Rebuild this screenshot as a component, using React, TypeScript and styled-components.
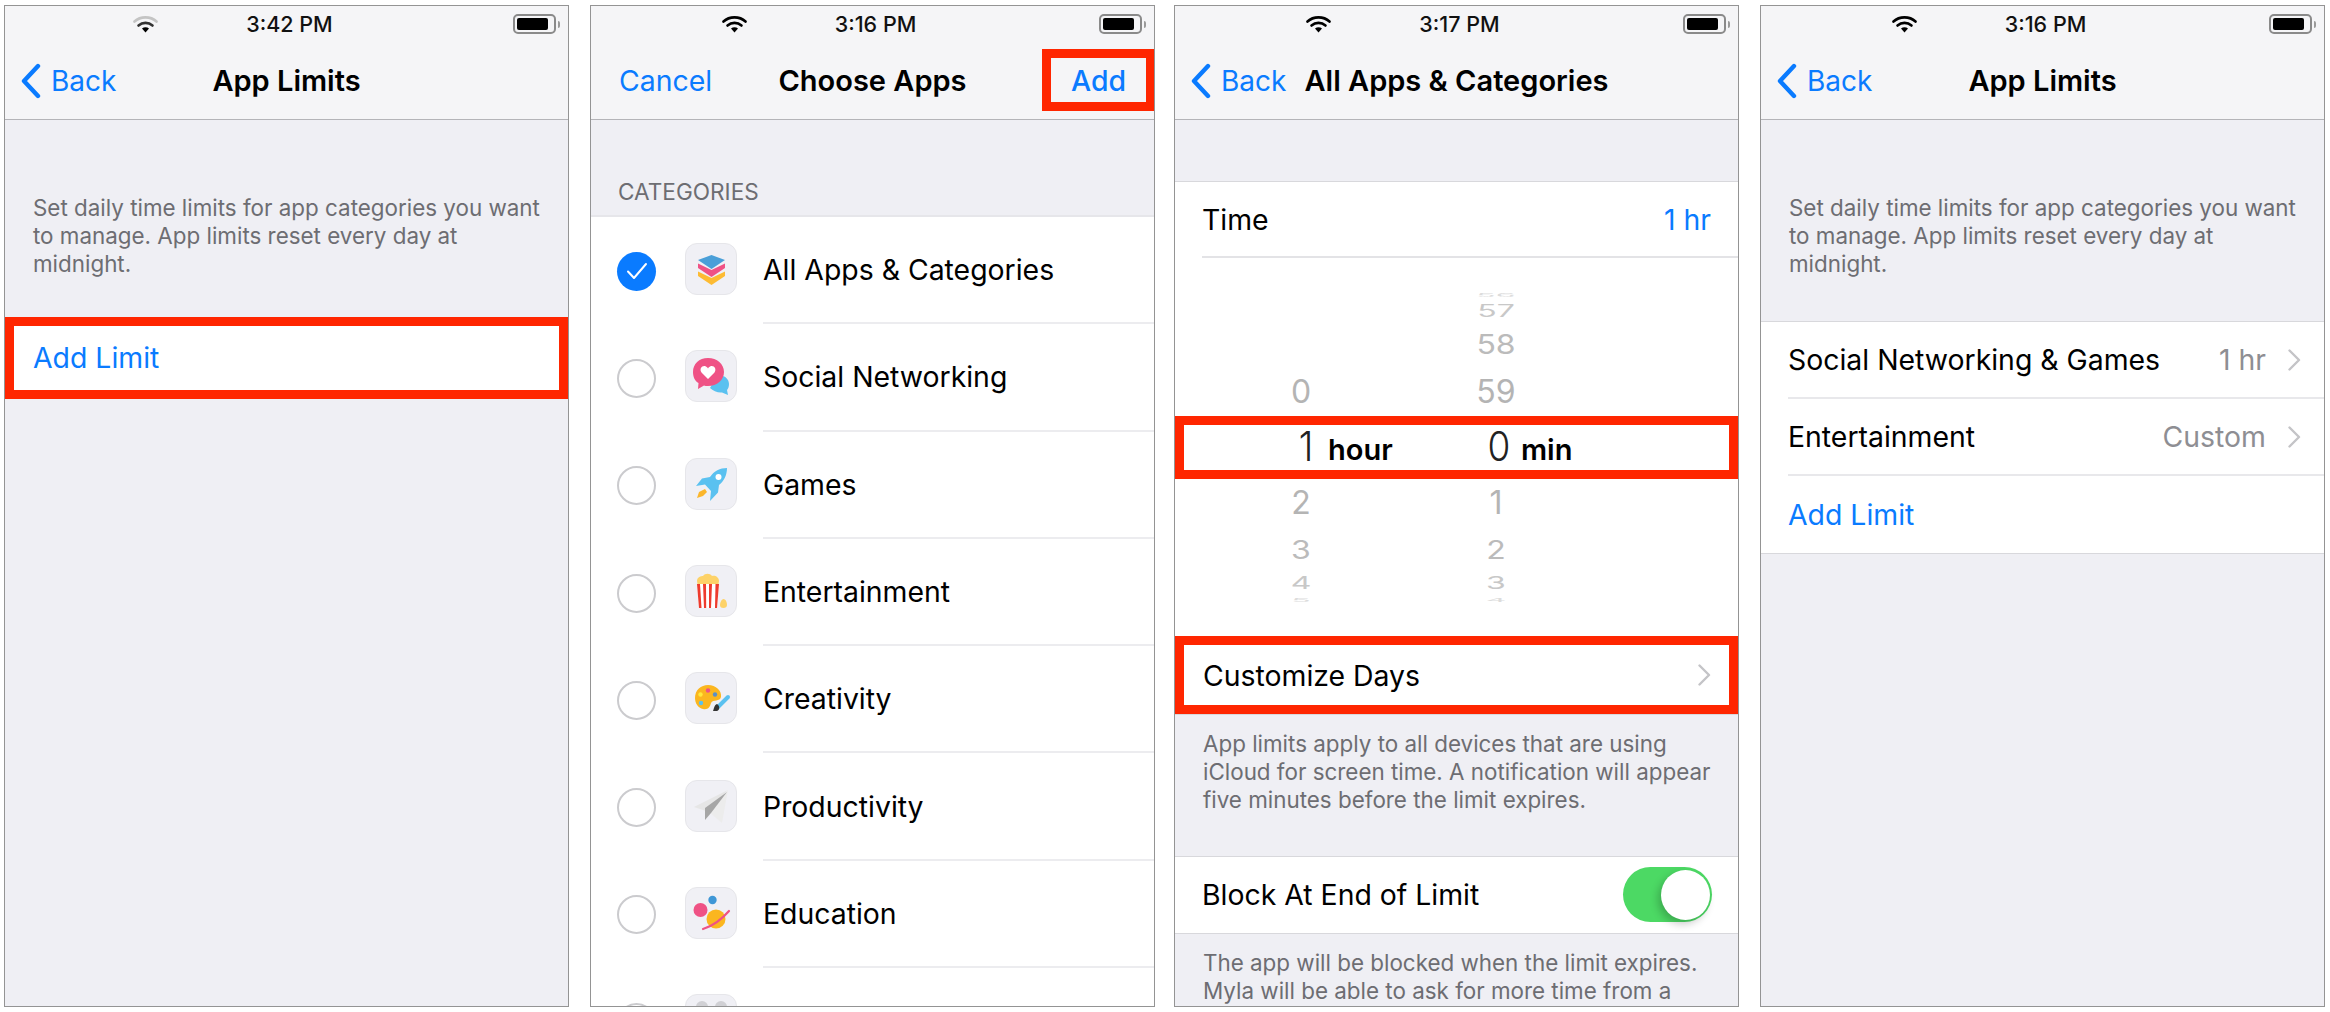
import * as React from "react";
import styled, { createGlobalStyle } from "styled-components";

const BLUE = "#0a7bff";
const RED = "#ff2600";
const SANS = `Inter, "Liberation Sans", sans-serif`;

const GlobalStyle = createGlobalStyle`
  html, body {
    margin: 0;
    padding: 0;
    background: #fff;
    font-family: ${SANS};
  }
`;

function WifiIcon({ dim }: { dim?: boolean }) {
  const outer = dim ? "#c4c4c4" : "#000";
  const mid = dim ? "#333" : "#000";
  return (
    <svg width="25" height="18" viewBox="0 0 25 18" fill="none">
      <path d="M1.5 6.5C7.5 1 17.5 1 23.5 6.5" stroke={outer} strokeWidth="2.6" strokeLinecap="round" />
      <path d="M5.5 10.5C9.5 7 15.5 7 19.5 10.5" stroke={mid} strokeWidth="2.6" strokeLinecap="round" />
      <path d="M9 13.4C11 11.7 14 11.7 16 13.4L12.5 17.5Z" fill="#000" />
    </svg>
  );
}

function ChevronLeft() {
  return (
    <svg width="21" height="36" viewBox="0 0 21 36" fill="none">
      <path d="M18 3L4 18L18 33" stroke={BLUE} strokeWidth="4.4" strokeLinecap="round" strokeLinejoin="round" />
    </svg>
  );
}

function Disclosure() {
  return (
    <svg width="13" height="22" viewBox="0 0 13 22" fill="none">
      <path d="M1.5 1.5L11 11L1.5 20.5" stroke="#c4c4c7" strokeWidth="2.4" strokeLinecap="round" strokeLinejoin="round" />
    </svg>
  );
}

function LayersIcon() {
  return (
    <svg width="51" height="51" viewBox="0 0 51 51">
      <path d="M25.5 34L39 27.5V32L25.5 41L12 32V27.5Z" fill="#fdbb33" />
      <path d="M25.5 26L39 19.5V24L25.5 33L12 24V19.5Z" fill="#ef5285" />
      <path d="M25.5 11L39 16L25.5 25L12 16Z" fill="#4a9fd8" strokeLinejoin="round" />
    </svg>
  );
}

function SocialIcon() {
  return (
    <svg width="51" height="51" viewBox="0 0 51 51">
      <path d="M31 25C38 23 43 28 43 33C43 36 42 38 41 39L42 44L36 41.5C32 42 27 40 24 37Z" fill="#5ac1f0" />
      <path d="M22 7C31 7 38 13 38 21C38 29 31 35 22 35C20 35 19 35 18 34.500L12 38L12.500 32C9 30 7 26 7 21C7 13 13 7 22 7Z" fill="#ef5285" />
      <path d="M22 28L15.500 21.500C13 18 16 14 19.500 15.200C20.700 15.600 21.500 16.500 22 17.500C22.500 16.500 23.300 15.600 24.500 15.200C28 14 31 18 28.500 21.500Z" fill="#fff" />
    </svg>
  );
}

function RocketIcon() {
  return (
    <svg width="51" height="51" viewBox="0 0 51 51">
      <path d="M41 9C34 9 28 12 24 18L16 19.500L10 27L19 25.500L25 32L24 42L32 33.500L33 26C38 22 41 16 41 9Z" fill="#5ac1f0" />
      <circle cx="32.500" cy="18" r="3" fill="#fff" />
      <path d="M19 30L13 33L11 39L17 37L21 33Z" fill="#fbb62c" />
    </svg>
  );
}

function PopcornIcon() {
  return (
    <svg width="51" height="51" viewBox="0 0 51 51">
      <path d="M11 15C11 11 15 10 17 10C19 7 24 7 26 10C29 9 33 11 33 15L32 21H12Z" fill="#fdd268" />
      <path d="M11 18H33L31 42H13Z" fill="#fff" />
      <path d="M11 18H14L15.500 42H13ZM17 18H20L20.200 42H18ZM23 18H26L25 42H23ZM29.500 18H33L31 42H29Z" fill="#ee3b2e" />
      <path d="M37.500 33C40 33 41 37 41 39C41 41 39.500 42 37.500 42C35 42 34 41 34 39C34 37 35.500 33 37.500 33Z" fill="#fdd268" />
    </svg>
  );
}

function PaletteIcon() {
  return (
    <svg width="51" height="51" viewBox="0 0 51 51">
      <path d="M22 12C30 12 36 18 35 24C34 29 27 26 25 30C24 34 22 37 17 36C12 35 9 30 9 25C9 17 15 12 22 12Z" fill="#fbb61f" />
      <circle cx="14.500" cy="21.500" r="2.200" fill="#ffe93b" />
      <circle cx="22" cy="17.500" r="2.200" fill="#ef5285" />
      <circle cx="29" cy="21.500" r="2.200" fill="#5b8fc7" />
      <circle cx="15" cy="30" r="2.200" fill="#5ac1f0" />
      <path d="M42 24L32 34" stroke="#5ac1f0" strokeWidth="4" strokeLinecap="round" />
      <path d="M31 31C34 33 34 37 31 38H27C28 36 28 32 31 31Z" fill="#333" />
    </svg>
  );
}

function PlaneIcon() {
  return (
    <svg width="51" height="51" viewBox="0 0 51 51">
      <path d="M42 9L8 26L20 30Z" fill="#e6e6e6" />
      <path d="M42 9L24 32L36 42Z" fill="#ececec" />
      <path d="M41 11L19 27V39L25 32Z" fill="#a6a6a6" />
    </svg>
  );
}

function PlanetIcon() {
  return (
    <svg width="51" height="51" viewBox="0 0 51 51">
      <circle cx="14.500" cy="22" r="7" fill="#ef5285" />
      <circle cx="26.500" cy="12" r="4.200" fill="#3f97d6" />
      <circle cx="30" cy="31" r="9.500" fill="#fbb61f" />
      <path d="M17 41C27 38 36 31 43 23" stroke="#ef5285" strokeWidth="2.200" strokeLinecap="round" fill="none" />
    </svg>
  );
}

function AppsIcon() {
  return (
    <svg width="51" height="51" viewBox="0 0 51 51">
      <circle cx="16" cy="12" r="6" fill="#d0d0d4" />
      <circle cx="35" cy="12" r="6" fill="#d0d0d4" />
    </svg>
  );
}

const categories = [
  { name: "All Apps & Categories", icon: <LayersIcon />, checked: true },
  { name: "Social Networking", icon: <SocialIcon /> },
  { name: "Games", icon: <RocketIcon /> },
  { name: "Entertainment", icon: <PopcornIcon /> },
  { name: "Creativity", icon: <PaletteIcon /> },
  { name: "Productivity", icon: <PlaneIcon /> },
  { name: "Education", icon: <PlanetIcon /> },
  { name: "", icon: <AppsIcon /> },
];

const wheelAbove = [
  { hour: "", min: "56", h: 10, s: 0.14, c: "#dcdcdc" },
  { hour: "", min: "57", h: 22, s: 0.52, c: "#c8c8c8" },
  { hour: "", min: "58", h: 46, s: 0.84, c: "#bbbbbb" },
  { hour: "0", min: "59", h: 48, s: 1, c: "#b4b4b4" },
];

const wheelBelow = [
  { hour: "2", min: "1", h: 48, s: 1, c: "#b4b4b4" },
  { hour: "3", min: "2", h: 46, s: 0.78, c: "#bbbbbb" },
  { hour: "4", min: "3", h: 20, s: 0.54, c: "#c8c8c8" },
  { hour: "5", min: "4", h: 14, s: 0.16, c: "#dcdcdc" },
];

function StatusBar({ time, dimWifi }: { time: string; dimWifi?: boolean }) {
  return (
    <Status>
      <StatusLeft>
        <WifiIcon dim={dimWifi} />
      </StatusLeft>
      <StatusTime>{time}</StatusTime>
      <StatusRight>
        <Battery>
          <BatteryFill />
        </Battery>
        <BatteryNub />
      </StatusRight>
    </Status>
  );
}

function BackLink() {
  return (
    <BackButton>
      <ChevronLeft />
      <span>Back</span>
    </BackButton>
  );
}

function LimitsIntro({ bottom }: { bottom: number }) {
  return (
    <Footnote $top={74} $bottom={bottom}>
      Set daily time limits for app categories you want to manage. App limits reset every day at midnight.
    </Footnote>
  );
}

function WheelRows({ rows }: { rows: typeof wheelAbove }) {
  return (
    <>
      {rows.map((r) => (
        <WheelRow key={r.min} $h={r.h}>
          <WheelDigit $c={r.c} style={{ transform: `scaleY(${r.s})` }}>
            {r.hour}
          </WheelDigit>
          <WheelDigit $c={r.c} style={{ transform: `scaleY(${r.s})` }}>
            {r.min}
          </WheelDigit>
        </WheelRow>
      ))}
    </>
  );
}

export default function App() {
  return (
    <>
      <GlobalStyle />
      <Stage>
        <Phone $offset={0}>
          <StatusBar time="3:42 PM" dimWifi />
          <NavBar>
            <BackLink />
            <NavTitle>App Limits</NavTitle>
          </NavBar>
          <Body>
            <LimitsIntro bottom={38} />
            <Highlight>
              <LinkText>Add Limit</LinkText>
            </Highlight>
          </Body>
        </Phone>

        <Phone $offset={21}>
          <StatusBar time="3:16 PM" />
          <NavBar>
            <CancelLink>Cancel</CancelLink>
            <NavTitle>Choose Apps</NavTitle>
            <AddButton>Add</AddButton>
          </NavBar>
          <Body>
            <SectionLabel>CATEGORIES</SectionLabel>
            <AppList>
              {categories.map((c) => (
                <AppRow key={c.name}>
                  <Radio $checked={c.checked}>
                    {c.checked && (
                      <svg width="22" height="18" viewBox="0 0 22 18" fill="none">
                        <path d="M2 9.500L8 16L20 2" stroke="#fff" strokeWidth="2" strokeLinecap="round" strokeLinejoin="round" />
                      </svg>
                    )}
                  </Radio>
                  <AppIcon>{c.icon}</AppIcon>
                  <AppName>{c.name}</AppName>
                </AppRow>
              ))}
            </AppList>
          </Body>
        </Phone>

        <Phone $offset={19}>
          <StatusBar time="3:17 PM" />
          <NavBar>
            <BackLink />
            <NavTitle>All Apps &amp; Categories</NavTitle>
          </NavBar>
          <Body>
            <Sheet $top={61}>
              <TimeRow>
                <RowText>Time</RowText>
                <LinkText>1 hr</LinkText>
              </TimeRow>
              <WheelSlice $height={158} $end>
                <WheelRows rows={wheelAbove} />
              </WheelSlice>
              <SelectedBand>
                <SelectedUnit>
                  <SelectedDigit>1</SelectedDigit>
                  <SelectedLabel>hour</SelectedLabel>
                </SelectedUnit>
                <SelectedUnit>
                  <SelectedDigit>0</SelectedDigit>
                  <SelectedLabel>min</SelectedLabel>
                </SelectedUnit>
              </SelectedBand>
              <WheelSlice $height={157}>
                <WheelRows rows={wheelBelow} />
              </WheelSlice>
              <Highlight $between>
                <RowText>Customize Days</RowText>
                <Disclosure />
              </Highlight>
            </Sheet>
            <Footnote $top={15} $bottom={41}>
              App limits apply to all devices that are using iCloud for screen time. A notification will appear five
              minutes before the limit expires.
            </Footnote>
            <ToggleRow>
              <RowText>Block At End of Limit</RowText>
              <Toggle>
                <ToggleKnob />
              </Toggle>
            </ToggleRow>
            <Footnote $top={15} $bottom={0}>
              The app will be blocked when the limit expires. Myla will be able to ask for more time from a
            </Footnote>
          </Body>
        </Phone>

        <Phone $offset={21}>
          <StatusBar time="3:16 PM" />
          <NavBar>
            <BackLink />
            <NavTitle>App Limits</NavTitle>
          </NavBar>
          <Body>
            <LimitsIntro bottom={42.5} />
            <Sheet>
              <LimitRow>
                <LimitInner>
                  <RowText>Social Networking &amp; Games</RowText>
                  <LimitValue>
                    1 hr
                    <Disclosure />
                  </LimitValue>
                </LimitInner>
              </LimitRow>
              <LimitRow>
                <LimitInner>
                  <RowText>Entertainment</RowText>
                  <LimitValue>
                    Custom
                    <Disclosure />
                  </LimitValue>
                </LimitInner>
              </LimitRow>
              <LimitRow>
                <LimitInner $last>
                  <LinkText>Add Limit</LinkText>
                </LimitInner>
              </LimitRow>
            </Sheet>
          </Body>
        </Phone>
      </Stage>
    </>
  );
}

const Stage = styled.div`
  display: flex;
  align-items: flex-start;
  width: 2330px;
  height: 1012px;
  padding: 5px 0 0 4px;
  box-sizing: border-box;
  overflow: hidden;
  background: #fff;
`;

const Phone = styled.div<{ $offset: number }>`
  display: flex;
  flex-direction: column;
  flex: none;
  box-sizing: border-box;
  width: 565px;
  height: 1002px;
  margin-left: ${(p) => p.$offset}px;
  border: 1px solid #949494;
  overflow: hidden;
  background: #efeff4;
`;

const Status = styled.div`
  display: grid;
  grid-template-columns: 1fr auto 1fr;
  align-items: center;
  flex: none;
  height: 36px;
  background: #f5f5f7;
`;

const StatusLeft = styled.div`
  display: flex;
  justify-content: flex-end;
  padding-right: 82px;
`;

const StatusTime = styled.div`
  margin-left: 6px;
  font-size: 21.5px;
  font-weight: 500;
  color: #111;
`;

const StatusRight = styled.div`
  display: flex;
  align-items: center;
  justify-content: flex-end;
  padding-right: 8px;
`;

const Battery = styled.div`
  box-sizing: border-box;
  width: 43px;
  height: 20px;
  padding: 2px;
  border: 2px solid #8a8a8a;
  border-radius: 5px;
`;

const BatteryFill = styled.div`
  width: 31px;
  height: 100%;
  background: #000;
  border-radius: 2px;
`;

const BatteryNub = styled.div`
  width: 2px;
  height: 7px;
  margin-left: 2px;
  background: #9a9a9a;
  border-radius: 0 2px 2px 0;
`;

const NavBar = styled.div`
  display: grid;
  grid-template-columns: 1fr auto 1fr;
  align-items: center;
  flex: none;
  box-sizing: border-box;
  height: 78px;
  border-bottom: 1px solid #b4b4b8;
  background: #f5f5f7;
`;

const NavTitle = styled.div`
  grid-column: 2;
  font-size: 29px;
  font-weight: 600;
  color: #000;
`;

const BackButton = styled.div`
  grid-column: 1;
  display: flex;
  align-items: center;
  gap: 10px;
  padding-left: 15px;
  font-size: 28px;
  color: ${BLUE};
`;

const CancelLink = styled.div`
  grid-column: 1;
  padding-left: 28px;
  font-size: 28.4px;
  color: ${BLUE};
`;

const AddButton = styled.div`
  grid-column: 3;
  justify-self: end;
  display: flex;
  align-items: center;
  justify-content: center;
  box-sizing: border-box;
  width: 112px;
  height: 62px;
  margin-top: -1px;
  border: 9px solid ${RED};
  border-right-width: 8px;
  font-size: 28.4px;
  font-weight: 500;
  color: ${BLUE};
  background: #f5f5f7;
`;

const Body = styled.div`
  display: flex;
  flex-direction: column;
  flex: 1;
  min-height: 0;
`;

const Footnote = styled.div<{ $top: number; $bottom: number }>`
  flex: none;
  padding: ${(p) => p.$top}px 20px ${(p) => p.$bottom}px 28px;
  font-size: 22.4px;
  line-height: 28.2px;
  color: #6d6d72;
`;

const SectionLabel = styled.div`
  flex: none;
  padding: 60px 0 11px 27px;
  font-size: 22.6px;
  line-height: 24px;
  color: #6d6d72;
`;

const Highlight = styled.div<{ $between?: boolean }>`
  display: flex;
  align-items: center;
  justify-content: ${(p) => (p.$between ? "space-between" : "flex-start")};
  flex: none;
  box-sizing: border-box;
  height: ${(p) => (p.$between ? 78 : 82)}px;
  padding: 0 18px 0 19px;
  border: 9px solid ${RED};
  background: #fff;
`;

const LinkText = styled.span`
  font-size: 28.4px;
  color: ${BLUE};
`;

const RowText = styled.span`
  font-size: 28.4px;
  color: #000;
`;

const AppList = styled.div`
  flex: none;
  border-top: 2px solid #e6e6ea;
  background: #fff;
`;

const AppRow = styled.div`
  display: flex;
  align-items: center;
  box-sizing: border-box;
  height: 107.3px;
  padding-left: 26px;
`;

const Radio = styled.div<{ $checked?: boolean }>`
  display: flex;
  align-items: center;
  justify-content: center;
  flex: none;
  box-sizing: border-box;
  width: 39px;
  height: 39px;
  margin: 1px 29px 0 0;
  border: ${(p) => (p.$checked ? "none" : "2px solid #cbcbce")};
  border-radius: 50%;
  background: ${(p) => (p.$checked ? BLUE : "#fff")};
`;

const AppIcon = styled.div`
  flex: none;
  box-sizing: border-box;
  width: 52px;
  height: 52px;
  margin-top: -3px;
  border: 1px solid #e6e6ea;
  border-radius: 12px;
  background: #f0f0f5;
`;

const AppName = styled.div`
  display: flex;
  align-items: center;
  flex: 1;
  box-sizing: border-box;
  height: 100%;
  margin-left: 26px;
  border-bottom: 2px solid #ececef;
  font-size: 28.4px;
  color: #000;
`;

const Sheet = styled.div<{ $top?: number }>`
  flex: none;
  margin-top: ${(p) => p.$top ?? 0}px;
  border-top: 1px solid #d8d8dc;
  border-bottom: 1px solid #d8d8dc;
  background: #fff;
`;

const TimeRow = styled.div`
  display: flex;
  align-items: center;
  justify-content: space-between;
  box-sizing: border-box;
  height: 76px;
  margin-left: 27px;
  padding-right: 27px;
  border-bottom: 2px solid #e3e3e6;
`;

const WheelSlice = styled.div<{ $height: number; $end?: boolean }>`
  display: flex;
  flex-direction: column;
  justify-content: ${(p) => (p.$end ? "flex-end" : "flex-start")};
  box-sizing: border-box;
  height: ${(p) => p.$height}px;
  padding-left: 86px;
`;

const WheelRow = styled.div<{ $h: number }>`
  display: grid;
  grid-template-columns: 80px 80px;
  grid-auto-rows: ${(p) => p.$h}px;
  column-gap: 115px;
  align-items: center;
  height: ${(p) => p.$h}px;
`;

const WheelDigit = styled.div<{ $c: string }>`
  font-size: 32px;
  line-height: 40px;
  text-align: center;
  color: ${(p) => p.$c};
`;

const SelectedBand = styled.div`
  display: flex;
  align-items: center;
  box-sizing: border-box;
  height: 63px;
  padding-left: 100px;
  border: 9px solid ${RED};
  background: #fff;
`;

const SelectedUnit = styled.div`
  display: flex;
  align-items: baseline;
  width: 193px;
  margin-top: -3px;
`;

const SelectedDigit = styled.span`
  display: inline-block;
  width: 44px;
  font-size: 37px;
  font-weight: 300;
  text-align: center;
  color: #222;
  transform: scaleY(1.1);
`;

const SelectedLabel = styled.span`
  font-size: 29px;
  font-weight: 600;
  color: #000;
`;

const ToggleRow = styled.div`
  display: flex;
  align-items: center;
  justify-content: space-between;
  flex: none;
  box-sizing: border-box;
  height: 78px;
  padding: 0 26px 0 27px;
  border-top: 1px solid #d8d8dc;
  border-bottom: 1px solid #d8d8dc;
  background: #fff;
`;

const Toggle = styled.div`
  display: flex;
  align-items: center;
  justify-content: flex-end;
  box-sizing: border-box;
  width: 89px;
  height: 55px;
  padding-right: 2px;
  border-radius: 28px;
  background: #4cd964;
`;

const ToggleKnob = styled.div`
  width: 49px;
  height: 50px;
  border-radius: 50%;
  background: #fff;
  box-shadow: -3px 4px 8px rgba(0, 0, 0, 0.22);
`;

const LimitRow = styled.div`
  height: 77px;
  padding-left: 27px;
`;

const LimitInner = styled.div<{ $last?: boolean }>`
  display: flex;
  align-items: center;
  justify-content: space-between;
  box-sizing: border-box;
  height: 100%;
  padding-right: 23px;
  border-bottom: ${(p) => (p.$last ? "none" : "2px solid #e8e8eb")};
`;

const LimitValue = styled.span`
  display: flex;
  align-items: center;
  gap: 22px;
  font-size: 28.4px;
  color: #8e8e93;
`;
